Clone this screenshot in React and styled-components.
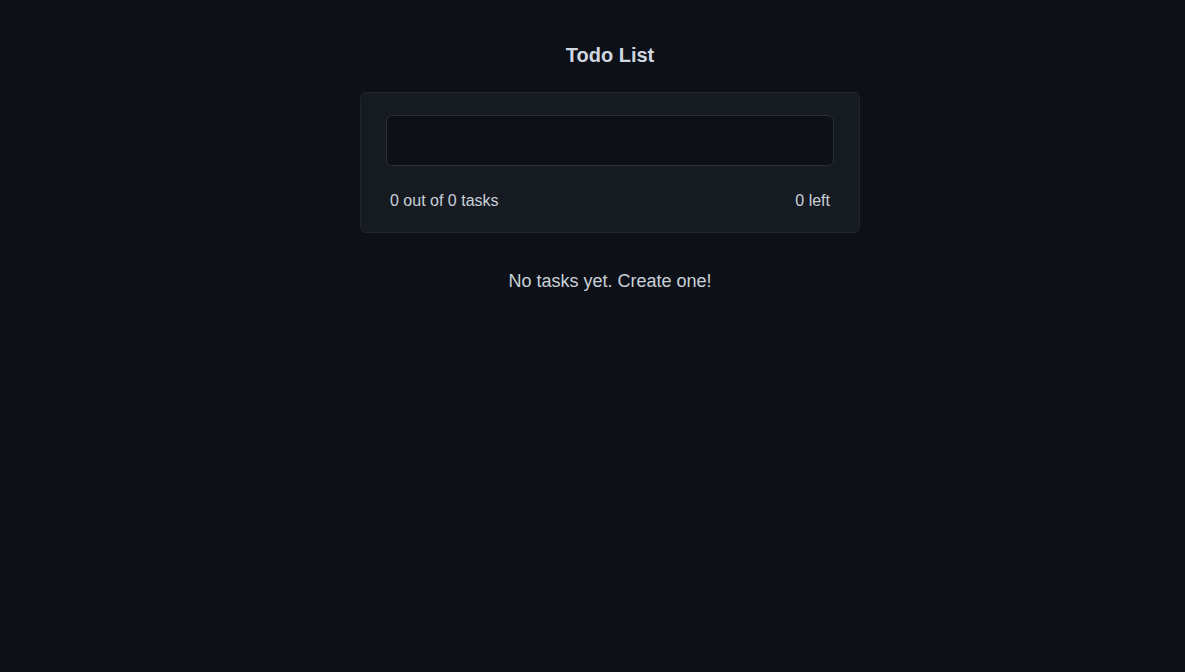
import React, { useState } from "react";
import styled, { createGlobalStyle } from "styled-components";

const GlobalStyle = createGlobalStyle`
  html, body {
    margin: 0;
    padding: 0;
    background: #0d1117;
    font-family: "Liberation Sans", Arial, sans-serif;
  }
  * { box-sizing: border-box; }
`;

const Page = styled.main`
  min-height: 100vh;
  display: flex;
  flex-direction: column;
  align-items: center;
  padding: 44px 0 0 35px;
  color: #c9d1d9;
`;

const Title = styled.h1`
  margin: 0 0 25px;
  font-size: 20px;
  line-height: 23px;
  font-weight: 700;
  color: #d0d7e1;
`;

const Card = styled.section`
  width: 500px;
  padding: 22px 25px;
  background: #161b22;
  border: 1px solid #21262d;
  border-radius: 6px;
`;

const Input = styled.input`
  display: block;
  width: 100%;
  height: 51px;
  padding: 0 14px;
  background: #0d1117;
  border: 1px solid #2a3039;
  border-radius: 6px;
  color: #c9d1d9;
  font-size: 16px;
  font-family: inherit;
  outline: none;
`;

const Stats = styled.div`
  display: flex;
  justify-content: space-between;
  margin-top: 26px;
  padding: 0 4px;
  font-size: 16px;
  line-height: 18px;
  color: #c9d1d9;
`;

const Empty = styled.p`
  margin: 38px 0 0;
  font-size: 18px;
  line-height: 21px;
  color: #c9d1d9;
`;

export default function App() {
  const [text, setText] = useState("");
  const tasks = [];
  const done = tasks.filter((t) => t.done).length;

  return (
    <>
      <GlobalStyle />
      <Page>
        <Title>Todo List</Title>
        <Card>
          <Input value={text} onChange={(e) => setText(e.target.value)} />
          <Stats>
            <span>{done} out of {tasks.length} tasks</span>
            <span>{tasks.length - done} left</span>
          </Stats>
        </Card>
        {tasks.length === 0 && <Empty>No tasks yet. Create one!</Empty>}
      </Page>
    </>
  );
}
